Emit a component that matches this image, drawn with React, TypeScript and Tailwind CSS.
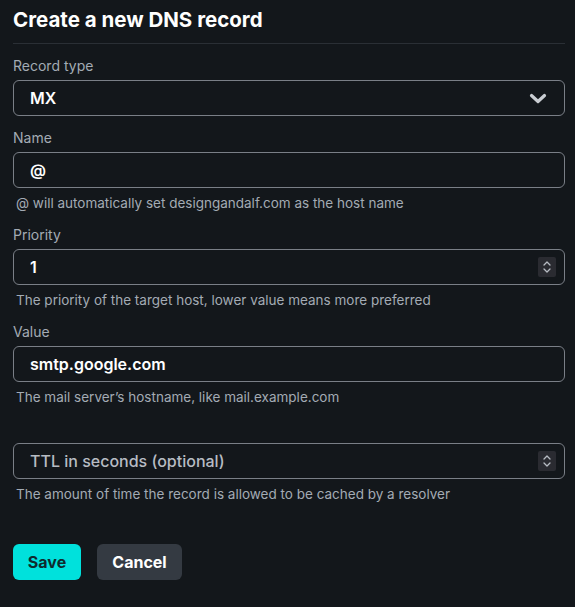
import React from "react";

const Spinner: React.FC = () => (
  <div className="flex h-[20px] w-[18px] items-center justify-center rounded-[2px] bg-[#2a2b31]">
    <svg width="10" height="14" viewBox="0 0 10 14" fill="none">
      <path d="M2 5l3-3 3 3" stroke="#b7bcc3" strokeWidth="1.3" strokeLinecap="round" strokeLinejoin="round" />
      <path d="M2 9l3 3 3-3" stroke="#b7bcc3" strokeWidth="1.3" strokeLinecap="round" strokeLinejoin="round" />
    </svg>
  </div>
);

const Chevron: React.FC = () => (
  <svg width="18" height="11" viewBox="0 0 18 11" fill="none">
    <path d="M2.5 2.5l6.5 6 6.5-6" stroke="#c9cdd2" strokeWidth="3.2" strokeLinecap="round" strokeLinejoin="round" />
  </svg>
);

type FieldProps = {
  label?: string;
  value?: string;
  placeholder?: string;
  help?: string;
  right?: React.ReactNode;
};

const Field: React.FC<FieldProps> = ({ label, value, placeholder, help, right }) => (
  <div className="flex flex-col">
    <div className="h-[20px] text-[14px] leading-[20px] text-[#a3abb4]">{label}</div>
    <div className="mt-[4px] flex h-[36px] items-center justify-between rounded-[6px] border border-[#7a7f87] pl-[16px] pr-[8px]">
      {value ? (
        <span className="text-[16px] font-semibold text-white">{value}</span>
      ) : (
        <span className="text-[16px] font-medium text-[#b7bcc3]">{placeholder}</span>
      )}
      {right}
    </div>
    {help && (
      <div className="mt-[6px] pl-[3px] text-[13.5px] leading-[18px] text-[#a3abb4]">{help}</div>
    )}
  </div>
);

const App: React.FC = () => {
  return (
    <div
      className="min-h-[607px] w-full bg-[#13171b] pl-[13px] pr-[10px] pt-[6px]"
      style={{ fontFamily: "Inter, 'Liberation Sans', sans-serif" }}
    >
      <h1 className="text-[20.5px] font-bold leading-[28px] text-white">Create a new DNS record</h1>
      <div className="mt-[9px] border-t border-[#2a2f35]" />

      <div className="mt-[12px] flex flex-col gap-[12px]">
        <Field
          label="Record type"
          value="MX"
          right={
            <div className="pr-[9px]">
              <Chevron />
            </div>
          }
        />
        <div className="flex flex-col gap-[13px]">
          <Field
            label="Name"
            value="@"
            help="@ will automatically set designgandalf.com as the host name"
          />
          <Field
            label="Priority"
            value="1"
            right={<Spinner />}
            help="The priority of the target host, lower value means more preferred"
          />
          <Field
            label="Value"
            value="smtp.google.com"
            help="The mail server’s hostname, like mail.example.com"
          />
          <Field
            placeholder="TTL in seconds (optional)"
            right={<Spinner />}
            help="The amount of time the record is allowed to be cached by a resolver"
          />
        </div>
      </div>

      <div className="mt-[41px] flex gap-[16px]">
        <button className="h-[36px] w-[68px] rounded-[6px] bg-[#00e1dc] text-[16px] font-bold text-[#0f2b2d]">
          Save
        </button>
        <button className="h-[36px] w-[85px] rounded-[6px] bg-[#343a42] text-[16px] font-bold text-white">
          Cancel
        </button>
      </div>
    </div>
  );
};

export default App;
